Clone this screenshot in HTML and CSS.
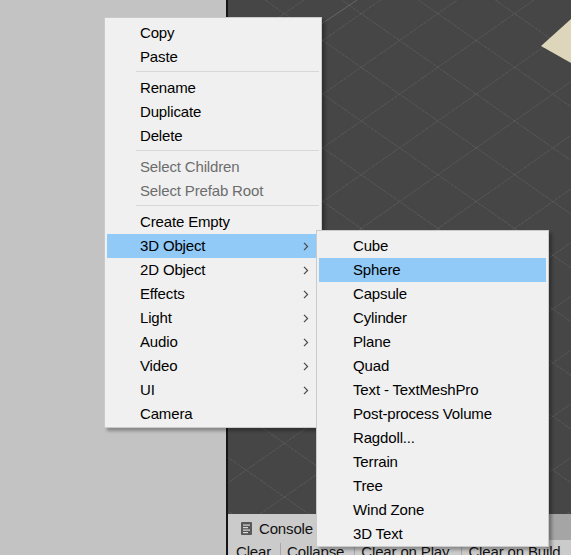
FILE: index.html
```html
<!DOCTYPE html>
<html>
<head>
<meta charset="utf-8">
<title>Context menu</title>
<link rel="stylesheet" href="styles.css">
</head>
<body>
<div class="app">
  <div class="hierarchy"></div>
  <div class="split"></div>
  <div class="right">
    <div class="scene">
      <svg class="scene-deco" width="343" height="514" viewBox="0 0 343 514">
        <line x1="129" y1="0" x2="0" y2="87" stroke="#676767" stroke-width="1"/>
        <polygon points="313,46 343,19 343,63" fill="#ddd6bb"/>
      </svg>
    </div>
    <div class="tabbar">
      <div class="tab">
        <svg class="tab-icon" width="11" height="13" viewBox="0 0 11 13">
          <rect x="0" y="0" width="11" height="13" rx="1" fill="#585858"/>
          <rect x="2" y="2.5" width="7" height="1.2" fill="#d8d8d8"/>
          <rect x="2" y="5" width="5" height="1.2" fill="#d8d8d8"/>
          <rect x="2" y="7.5" width="7" height="1.2" fill="#d8d8d8"/>
          <rect x="2" y="10" width="5" height="1.2" fill="#d8d8d8"/>
        </svg>
        <span class="tab-label">Console</span>
      </div>
    </div>
    <div class="toolbar">
      <span class="tool first">Clear</span>
      <span class="tool">Collapse</span>
      <span class="tool wide">Clear on Play</span>
      <span class="tool">Clear on Build</span>
    </div>
  </div>
</div>

<div class="menu main-menu">
  <div class="item">Copy</div>
  <div class="item">Paste</div>
  <div class="sep"></div>
  <div class="item">Rename</div>
  <div class="item">Duplicate</div>
  <div class="item">Delete</div>
  <div class="sep"></div>
  <div class="item disabled">Select Children</div>
  <div class="item disabled">Select Prefab Root</div>
  <div class="sep"></div>
  <div class="item">Create Empty</div>
  <div class="item active">3D Object<svg class="chev" width="6" height="9" viewBox="0 0 6 9"><path d="M1 0.8 L4.6 4.5 L1 8.2" fill="none" stroke="#4a4a4a" stroke-width="1.2"/></svg></div>
  <div class="item">2D Object<svg class="chev" width="6" height="9" viewBox="0 0 6 9"><path d="M1 0.8 L4.6 4.5 L1 8.2" fill="none" stroke="#4a4a4a" stroke-width="1.2"/></svg></div>
  <div class="item">Effects<svg class="chev" width="6" height="9" viewBox="0 0 6 9"><path d="M1 0.8 L4.6 4.5 L1 8.2" fill="none" stroke="#4a4a4a" stroke-width="1.2"/></svg></div>
  <div class="item">Light<svg class="chev" width="6" height="9" viewBox="0 0 6 9"><path d="M1 0.8 L4.6 4.5 L1 8.2" fill="none" stroke="#4a4a4a" stroke-width="1.2"/></svg></div>
  <div class="item">Audio<svg class="chev" width="6" height="9" viewBox="0 0 6 9"><path d="M1 0.8 L4.6 4.5 L1 8.2" fill="none" stroke="#4a4a4a" stroke-width="1.2"/></svg></div>
  <div class="item">Video<svg class="chev" width="6" height="9" viewBox="0 0 6 9"><path d="M1 0.8 L4.6 4.5 L1 8.2" fill="none" stroke="#4a4a4a" stroke-width="1.2"/></svg></div>
  <div class="item">UI<svg class="chev" width="6" height="9" viewBox="0 0 6 9"><path d="M1 0.8 L4.6 4.5 L1 8.2" fill="none" stroke="#4a4a4a" stroke-width="1.2"/></svg></div>
  <div class="item">Camera</div>
</div>

<div class="menu sub-menu">
  <div class="item">Cube</div>
  <div class="item active">Sphere</div>
  <div class="item">Capsule</div>
  <div class="item">Cylinder</div>
  <div class="item">Plane</div>
  <div class="item">Quad</div>
  <div class="item">Text - TextMeshPro</div>
  <div class="item">Post-process Volume</div>
  <div class="item">Ragdoll...</div>
  <div class="item">Terrain</div>
  <div class="item">Tree</div>
  <div class="item">Wind Zone</div>
  <div class="item">3D Text</div>
</div>
</body>
</html>
```

FILE: styles.css
```css
html, body {
  margin: 0;
  padding: 0;
}

body {
  width: 571px;
  height: 555px;
  overflow: hidden;
  position: relative;
  font-family: "Liberation Sans", Arial, sans-serif;
  font-size: 15px;
  letter-spacing: -0.15px;
  color: #000;
}

.app {
  display: flex;
  width: 571px;
  height: 555px;
}

.hierarchy {
  width: 226px;
  flex: none;
  background: #c3c3c3;
}

.split {
  width: 2px;
  flex: none;
  background: #151515;
}

.right {
  flex: 1;
  display: flex;
  flex-direction: column;
  min-width: 0;
}

.scene {
  height: 514px;
  flex: none;
  position: relative;
  overflow: hidden;
  background-color: #464646;
  background-image:
    repeating-linear-gradient(145deg, transparent 0 43px, rgba(255,255,255,0.06) 43px 44px),
    repeating-linear-gradient(215deg, transparent 0 43px, rgba(255,255,255,0.06) 43px 44px);
}

.scene-deco {
  position: absolute;
  left: 0;
  top: 0;
}

.tabbar {
  height: 26px;
  flex: none;
  display: flex;
  background: #a5a5a5;
}

.tab {
  width: 90px;
  display: flex;
  align-items: center;
  gap: 7px;
  padding: 3px 0 0 13px;
  box-sizing: border-box;
  background: #cbcbcb;
}

.tab-icon {
  display: block;
  flex: none;
}

.tab-label {
  color: #111;
}

.toolbar {
  flex: 1;
  display: flex;
  background: #cbcbcb;
  padding-top: 3px;
  line-height: 18px;
  white-space: nowrap;
  color: #111;
}

.tool {
  padding: 0 10px 0 6px;
  border-left: 1px solid #a8a8a8;
  height: 18px;
}

.tool.first {
  border-left: none;
  padding-left: 8px;
  padding-right: 9px;
}

.tool.wide {
  padding-right: 12px;
}

.menu {
  position: absolute;
  box-sizing: border-box;
  background: #f0f0f0;
  border: 1px solid #cacaca;
  padding: 3px 2px 1px;
  box-shadow: 3px 3px 3px rgba(0, 0, 0, 0.3);
}

.main-menu {
  left: 104px;
  top: 17px;
  width: 218px;
}

.sub-menu {
  left: 316px;
  top: 230px;
  width: 233px;
  padding-bottom: 0;
}

.item {
  height: 24px;
  line-height: 24px;
  display: flex;
  align-items: center;
  justify-content: space-between;
  padding: 0 10px 0 33px;
  white-space: nowrap;
}

.sub-menu .item {
  padding-left: 34px;
}

.item.active {
  background: #91c9f7;
}

.item.disabled {
  color: #6d6d6d;
}

.chev {
  display: block;
  flex: none;
}

.sep {
  height: 1px;
  margin: 2px 0 4px 29px;
  background: #d7d7d7;
}
```
